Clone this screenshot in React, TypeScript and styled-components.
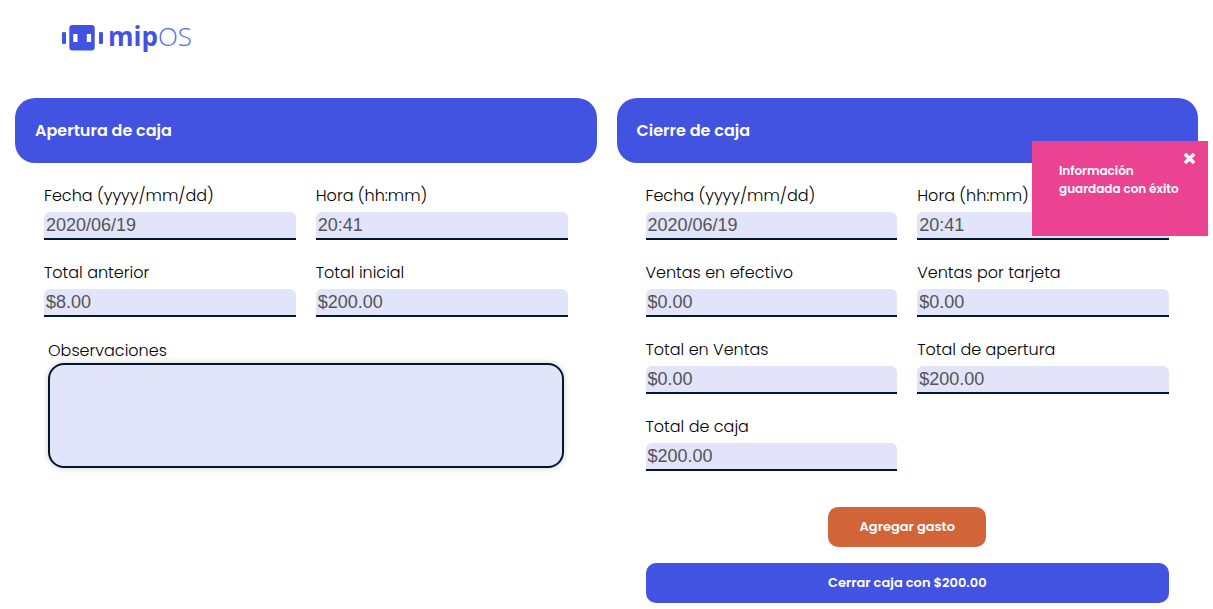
import React, { useId, useState } from "react";
import styled, { createGlobalStyle } from "styled-components";

const colors = {
  primary: "#4353e1",
  accent: "#d26439",
  notice: "#eb4391",
  field: "#e2e4fa",
  line: "#03182f",
  value: "#545454",
};

const GlobalStyle = createGlobalStyle`
  *, *::before, *::after {
    box-sizing: border-box;
  }
  body {
    margin: 0;
    background: #ffffff;
    color: #000000;
    font-family: Poppins, Inter, sans-serif;
    font-size: 16px;
    line-height: 24px;
  }
`;

const Page = styled.div`
  padding: 0 15px 6px;
`;

const Header = styled.header`
  display: flex;
  align-items: center;
  height: 76px;
  margin-bottom: 22px;
  padding-left: 47px;
`;

const LogoLink = styled.a`
  display: flex;
  align-items: flex-start;
  gap: 5px;
  color: ${colors.primary};
  text-decoration: none;
`;

const LogoText = styled.span`
  font-family: "Open Sans", sans-serif;
  font-size: 26px;
  line-height: 22px;
  font-weight: 700;
`;

const LogoThin = styled.span`
  font-weight: 300;
  color: #5c6be6;
`;

const Columns = styled.main`
  display: grid;
  grid-template-columns: 1fr 1fr;
  gap: 20px;
  align-items: start;
`;

const PanelTitle = styled.h2`
  display: flex;
  align-items: center;
  height: 65px;
  margin: 0;
  padding: 0 20px;
  border-radius: 20px;
  background: ${colors.primary};
  color: #ffffff;
  font-size: 16px;
  line-height: 24px;
  font-weight: 600;
`;

const PanelBody = styled.div`
  padding: 21px 29px 0;
`;

const Fields = styled.div`
  display: grid;
  grid-template-columns: 1fr 1fr;
  gap: 21px 20px;
`;

const FieldBox = styled.div`
  display: flex;
  flex-direction: column;
  gap: 4px;
`;

const Label = styled.label`
  font-size: 16px;
  line-height: 24px;
  font-weight: 300;
  white-space: nowrap;
`;

const TextInput = styled.input`
  width: 100%;
  height: 28px;
  padding: 0 2px;
  border: 0;
  border-bottom: 2px solid ${colors.line};
  border-radius: 6px 6px 0 0;
  outline: 0;
  background: ${colors.field};
  color: ${colors.value};
  font-family: "Liberation Sans", Arial, sans-serif;
  font-size: 18px;
`;

const NotesBox = styled.div`
  display: flex;
  flex-direction: column;
  margin-top: 22px;
  padding: 0 4px;
`;

const NotesArea = styled.textarea`
  width: 100%;
  height: 105px;
  padding: 10px;
  border: 2px solid ${colors.line};
  border-radius: 16px;
  outline: 0;
  resize: none;
  background: ${colors.field};
  color: ${colors.value};
  box-shadow: 0 0 6px rgba(0, 0, 0, 0.2);
  font-family: "Liberation Sans", Arial, sans-serif;
  font-size: 18px;
`;

const Actions = styled.div`
  display: flex;
  flex-direction: column;
  align-items: center;
  gap: 16px;
  margin-top: 36px;
`;

const Button = styled.button<{ $tone: string; $wide?: boolean }>`
  width: ${(p) => (p.$wide ? "100%" : "158px")};
  height: 40px;
  padding: 0;
  border: 0;
  border-radius: 10px;
  background: ${(p) => p.$tone};
  color: #ffffff;
  font-family: inherit;
  font-size: 13px;
  line-height: 20px;
  font-weight: 600;
  cursor: pointer;
`;

const Notice = styled.div`
  position: fixed;
  top: 141px;
  right: 5px;
  width: 176px;
  height: 95px;
  padding: 21px 27px;
  background: ${colors.notice};
  color: #ffffff;
  font-size: 12px;
  line-height: 18px;
  font-weight: 600;
`;

const NoticeText = styled.p`
  margin: 0;
  white-space: nowrap;
`;

const CloseButton = styled.button`
  position: absolute;
  top: 11px;
  right: 12px;
  display: flex;
  padding: 0;
  border: 0;
  background: none;
  color: inherit;
  cursor: pointer;
`;

function LogoMark() {
  return (
    <svg width="41" height="26" viewBox="0 0 41 26" aria-hidden="true" fill="currentColor">
      <rect x="0" y="7" width="4" height="12" rx="1.3" />
      <path
        fillRule="evenodd"
        d="M10.3 0h19.4a3 3 0 0 1 3 3v19.4a3 3 0 0 1-3 3H10.3a3 3 0 0 1-3-3V3a3 3 0 0 1 3-3zM11.2 9v8h4.3V9zM24.8 9v8h4.3V9z"
      />
      <rect x="37" y="7" width="4" height="12" rx="1.3" />
    </svg>
  );
}

function Field({ label, value }: { label: string; value: string }) {
  const id = useId();
  return (
    <FieldBox>
      <Label htmlFor={id}>{label}</Label>
      <TextInput id={id} type="text" defaultValue={value} />
    </FieldBox>
  );
}

const opening = [
  ["Fecha (yyyy/mm/dd)", "2020/06/19"],
  ["Hora (hh:mm)", "20:41"],
  ["Total anterior", "$8.00"],
  ["Total inicial", "$200.00"],
];

const closing = [
  ["Fecha (yyyy/mm/dd)", "2020/06/19"],
  ["Hora (hh:mm)", "20:41"],
  ["Ventas en efectivo", "$0.00"],
  ["Ventas por tarjeta", "$0.00"],
  ["Total en Ventas", "$0.00"],
  ["Total de apertura", "$200.00"],
  ["Total de caja", "$200.00"],
];

export default function App() {
  const [noticeOpen, setNoticeOpen] = useState(true);
  return (
    <Page>
      <GlobalStyle />
      <Header>
        <LogoLink href="#">
          <LogoMark />
          <LogoText>
            mip<LogoThin>OS</LogoThin>
          </LogoText>
        </LogoLink>
      </Header>
      <Columns>
        <section>
          <PanelTitle>Apertura de caja</PanelTitle>
          <PanelBody>
            <Fields>
              {opening.map(([label, value]) => (
                <Field key={label} label={label} value={value} />
              ))}
            </Fields>
            <NotesBox>
              <Label htmlFor="notes">Observaciones</Label>
              <NotesArea id="notes" />
            </NotesBox>
          </PanelBody>
        </section>
        <section>
          <PanelTitle>Cierre de caja</PanelTitle>
          <PanelBody>
            <Fields>
              {closing.map(([label, value]) => (
                <Field key={label} label={label} value={value} />
              ))}
            </Fields>
            <Actions>
              <Button type="button" $tone={colors.accent}>
                Agregar gasto
              </Button>
              <Button type="button" $tone={colors.primary} $wide>
                Cerrar caja con $200.00
              </Button>
            </Actions>
          </PanelBody>
        </section>
      </Columns>
      {noticeOpen && (
        <Notice role="status">
          <CloseButton type="button" aria-label="Cerrar" onClick={() => setNoticeOpen(false)}>
            <svg width="13" height="13" viewBox="0 0 13 13" aria-hidden="true">
              <path d="M1.9 1.9l9.2 9.2M11.1 1.9l-9.2 9.2" stroke="currentColor" strokeWidth="3.6" />
            </svg>
          </CloseButton>
          <NoticeText>
            Información
            <br />
            guardada con éxito
          </NoticeText>
        </Notice>
      )}
    </Page>
  );
}
